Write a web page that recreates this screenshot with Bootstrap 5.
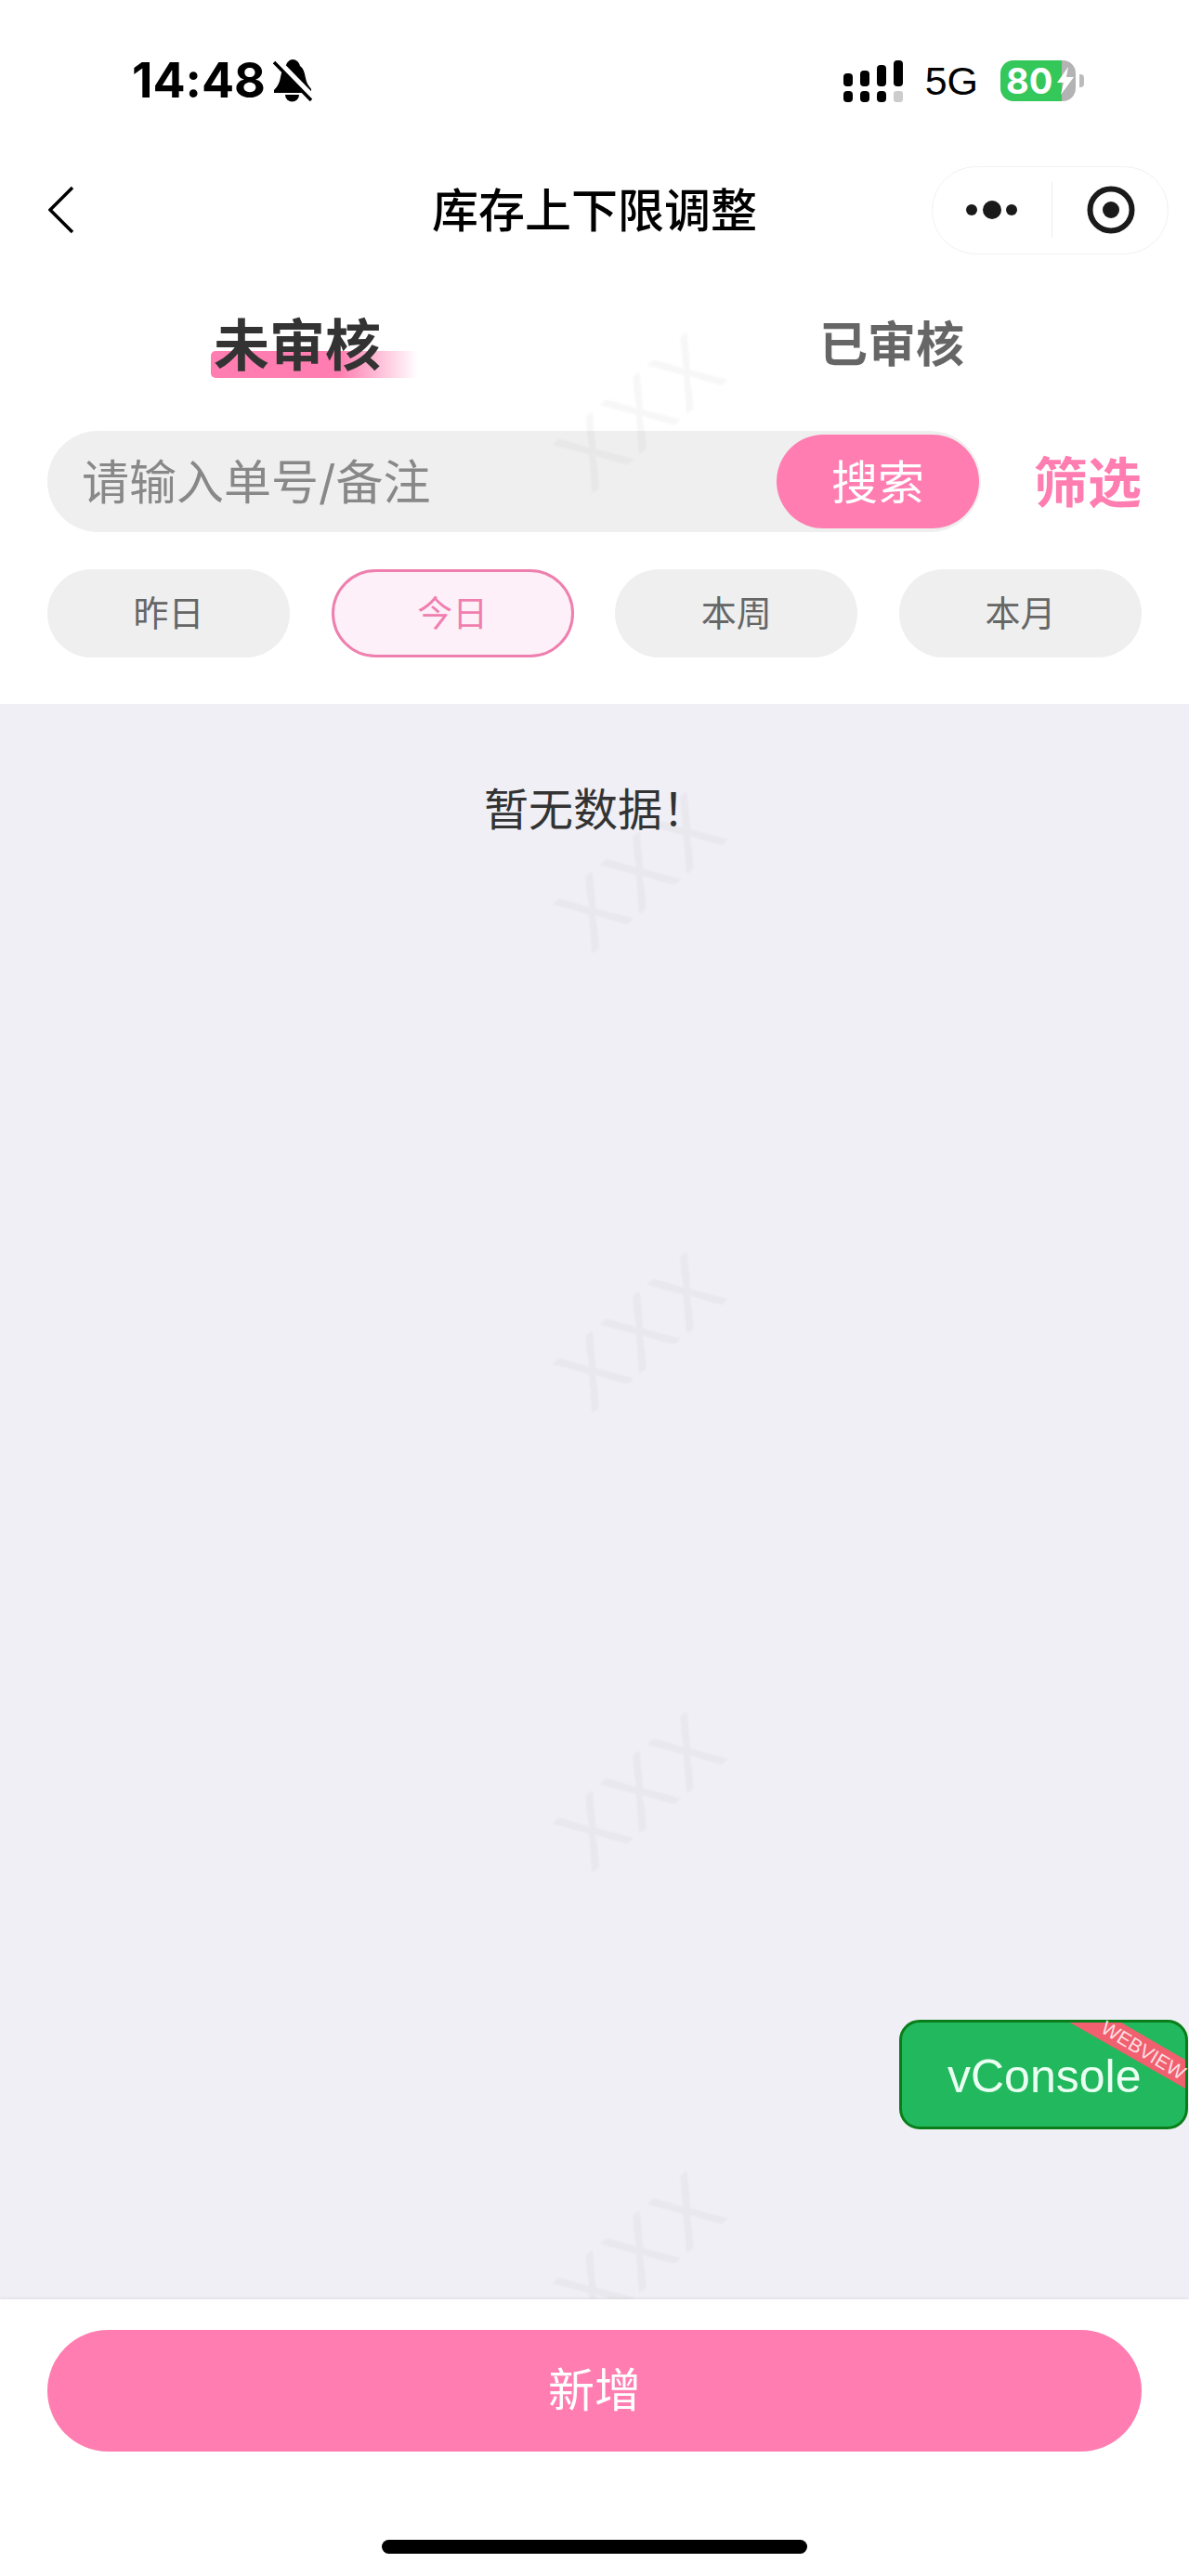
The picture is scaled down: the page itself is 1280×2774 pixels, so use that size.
<!DOCTYPE html>
<html lang="zh-CN">
<head>
    <meta charset="UTF-8">
    <meta name="viewport" content="width=device-width, initial-scale=1.0">
    <title>库存上下限调整</title>
    <link href="https://cdn.jsdelivr.net/npm/bootstrap@5.3.0/dist/css/bootstrap.min.css" rel="stylesheet">
    <style>
        body {
            font-family: "Inter", "Noto Sans CJK SC", sans-serif;
            background: #fff;
            overflow: hidden;
        }
        .phone-page {
            width: 1280px;
            height: 2774px;
        }
        /* status bar */
        .status-bar {
            height: 174px;
            padding: 0 113px 0 142px;
        }
        .status-time {
            font-size: 52px;
            font-weight: 700;
            font-feature-settings: "calt" 0;
            line-height: 1;
            color: #000;
        }
        .status-net {
            font-family: "Liberation Sans", sans-serif;
            font-size: 43px;
            line-height: 1;
            color: #000;
        }
        .battery-body {
            width: 81px;
            height: 44px;
            border-radius: 14px;
            padding-left: 6px;
            background: linear-gradient(90deg, #34c759 66px, #b3b3b3 66px);
            color: #fff;
            font-size: 38px;
            font-weight: 700;
            line-height: 44px;
        }
        .battery-nub {
            width: 5px;
            height: 14px;
            margin-left: 4px;
            border-radius: 0 4px 4px 0;
            background: #bbb;
        }
        /* title bar */
        .title-bar {
            display: grid;
            grid-template-columns: 1fr auto 1fr;
            align-items: center;
            height: 104px;
            padding: 0 22px;
        }
        .title-back {
            margin-left: 30px;
        }
        .title-text {
            padding-top: 2px;
            font-size: 50px;
            font-weight: 500;
            color: #000;
        }
        .capsule {
            width: 255px;
            height: 95px;
            padding-left: 36px;
            gap: 37px;
            border: 1px solid #f1f1f1;
            border-radius: 48px;
            justify-self: end;
        }
        .capsule-line {
            width: 1px;
            height: 60px;
            background: #ececec;
        }
        /* tabs */
        .tab-row {
            height: 182px;
            padding-top: 6px;
        }
        .tab-on {
            font-size: 60px;
            font-weight: 700;
            line-height: 1;
            color: #333;
        }
        .tab-on::before {
            content: "";
            position: absolute;
            left: -3px;
            top: 36px;
            width: 223px;
            height: 29px;
            border-radius: 5px;
            background: linear-gradient(90deg, #ff7db0 62%, rgba(255, 125, 176, 0) 100%);
            z-index: -1;
        }
        .tab-off {
            font-size: 52px;
            font-weight: 700;
            line-height: 1;
            color: #666;
        }
        /* search */
        .search-row {
            padding: 4px 51px 0;
        }
        .search-box {
            width: 1005px;
            height: 109px;
            padding: 0 2px 0 37px;
            background: #efefef;
        }
        .search-hint {
            padding-top: 3px;
            font-size: 51px;
            color: #888;
        }
        .search-btn {
            width: 218px;
            height: 101px;
            padding: 3px 0 0;
            border: 0;
            font-size: 50px;
            color: #fff;
            background: #ff7db0;
        }
        .filter-text {
            padding-top: 3px;
            font-size: 58px;
            font-weight: 700;
            color: #ff7db0;
        }
        /* date pills */
        .date-row {
            padding: 40px 51px 50px;
        }
        .date-pill {
            width: 261px;
            height: 95px;
            padding: 0;
            border: 3px solid transparent;
            font-size: 38px;
            color: #666;
            background: #efefef;
        }
        .date-pill.date-on {
            border-color: #ee7fae;
            color: #f07fb0;
            background: #fdf0f8;
        }
        /* list */
        .list-area {
            background: #efeff5;
            padding: 79px 0 0 2px;
        }
        .empty-text {
            font-size: 48px;
            line-height: 70px;
            color: #333;
        }
        /* watermark */
        .mark-layer {
            position: absolute;
            top: 0;
            left: 0;
            right: 0;
            bottom: 298px;
            display: grid;
            grid-auto-rows: 495px;
            justify-items: center;
            align-items: center;
            padding: 188px 0 0 84px;
            pointer-events: none;
            z-index: 1;
        }
        .mark-text {
            font-size: 125px;
            font-weight: 300;
            line-height: 1;
            color: rgba(0, 0, 0, 0.03);
            filter: blur(1px);
            transform: rotate(-40deg);
        }
        /* bottom */
        .bottom-bar {
            position: relative;
            z-index: 2;
            height: 298px;
            padding: 33px 51px 0;
            background: #fff;
            box-shadow: 0 -1px 3px rgba(0, 0, 0, 0.08);
        }
        .add-btn {
            height: 131px;
            padding: 0;
            border: 0;
            font-size: 50px;
            color: #fff;
            background: #ff7db0;
        }
        .home-bar {
            width: 458px;
            height: 15px;
            margin: 95px auto 0;
            border-radius: 8px;
            background: #000;
        }
        /* vConsole switch */
        .vc-switch {
            position: absolute;
            left: 968px;
            top: 2175px;
            width: 311px;
            height: 118px;
            border: 3px solid #0a7d1a;
            border-radius: 22px;
            background: #22b95e;
            color: #eafff2;
            font-family: "Liberation Sans", sans-serif;
            font-size: 50px;
            line-height: 116px;
            padding-left: 49px;
            z-index: 3;
        }
        .vc-ribbon {
            position: absolute;
            top: 0;
            right: 0;
            width: 124px;
            height: 72px;
            background: #f0606f;
            clip-path: polygon(0 0, 55px 0, 124px 40px, 124px 71px);
        }
        .vc-ribbon-text {
            position: absolute;
            left: 209px;
            top: 18px;
            font-size: 21px;
            line-height: 24px;
            color: #ffdfe3;
            transform: rotate(31deg);
        }
    </style>
</head>
<body>
    <div class="phone-page position-relative d-flex flex-column">
        <!-- Status bar -->
        <div class="status-bar d-flex align-items-center justify-content-between">
            <div class="d-flex align-items-center">
                <span class="status-time">14:48</span>
                <svg class="ms-2" width="42" height="46" viewBox="0 0 42 46">
                    <path d="M21 0C25 0 28 3 29 7C33 10 34 15 35 20C36 26 39 29 41 32V36H1V33C5 29 7 25 8 19C9 13 11 9 14 6C15 3 18 0 21 0Z" fill="#000"/>
                    <path d="M13 38H28A7.500 7.500 0 0 1 13 38Z" fill="#000"/>
                    <path d="M3 1L42 41" stroke="#fff" stroke-width="8"/>
                    <path d="M1 3L41 44" stroke="#000" stroke-width="3.500"/>
                </svg>
            </div>
            <div class="d-flex align-items-center">
                <svg width="64" height="45" viewBox="0 0 64 45">
                    <rect x="0" y="14" width="10" height="14" rx="4"/>
                    <rect x="18" y="11" width="10" height="17" rx="4"/>
                    <rect x="36" y="5" width="10" height="23" rx="4"/>
                    <rect x="54" y="0" width="10" height="28" rx="4"/>
                    <rect x="0" y="33" width="10" height="12" rx="4"/>
                    <rect x="18" y="33" width="10" height="12" rx="4"/>
                    <rect x="36" y="33" width="10" height="12" rx="4"/>
                    <rect x="54" y="33" width="10" height="12" rx="3" fill="#ccc"/>
                </svg>
                <span class="status-net mx-4">5G</span>
                <div class="battery-body d-flex align-items-center">
                    <span>80</span>
                    <svg width="20" height="30" viewBox="0 0 20 30" class="flex-shrink-0 ms-1">
                        <path d="M13 0L1 17H8L5 30L19 11H11Z" fill="#fff"/>
                    </svg>
                </div>
                <div class="battery-nub"></div>
            </div>
        </div>

        <!-- Title bar -->
        <div class="title-bar">
            <svg class="title-back" width="28" height="52" viewBox="0 0 28 52">
                <path d="M26 2L2 26L26 50" fill="none" stroke="#000" stroke-width="3.500"/>
            </svg>
            <div class="title-text">库存上下限调整</div>
            <div class="capsule d-flex align-items-center">
                <svg width="55" height="20" viewBox="0 0 55 20">
                    <circle cx="6" cy="10" r="6" fill="#1a1a1a"/>
                    <circle cx="28" cy="10" r="10" fill="#1a1a1a"/>
                    <circle cx="49" cy="10" r="6" fill="#1a1a1a"/>
                </svg>
                <div class="capsule-line"></div>
                <svg width="52" height="52" viewBox="0 0 52 52">
                    <circle cx="26" cy="26" r="22.500" fill="none" stroke="#1a1a1a" stroke-width="6"/>
                    <circle cx="26" cy="26" r="9" fill="#1a1a1a"/>
                </svg>
            </div>
        </div>

        <!-- Tabs -->
        <div class="tab-row row g-0 align-items-center text-center">
            <div class="col-6">
                <span class="tab-on position-relative d-inline-block">未审核</span>
            </div>
            <div class="col-6">
                <span class="tab-off">已审核</span>
            </div>
        </div>

        <!-- Search -->
        <div class="search-row d-flex align-items-center justify-content-between">
            <div class="search-box rounded-pill d-flex align-items-center justify-content-between">
                <span class="search-hint">请输入单号/备注</span>
                <button type="button" class="btn search-btn rounded-pill">搜索</button>
            </div>
            <span class="filter-text">筛选</span>
        </div>

        <!-- Date filter -->
        <div class="date-row d-flex justify-content-between">
            <button type="button" class="btn date-pill rounded-pill">昨日</button>
            <button type="button" class="btn date-pill date-on rounded-pill">今日</button>
            <button type="button" class="btn date-pill rounded-pill">本周</button>
            <button type="button" class="btn date-pill rounded-pill">本月</button>
        </div>

        <!-- List -->
        <div class="list-area flex-grow-1 text-center">
            <div class="empty-text">暂无数据！</div>
        </div>

        <!-- Bottom -->
        <div class="bottom-bar">
            <button type="button" class="btn add-btn rounded-pill w-100">新增</button>
            <div class="home-bar"></div>
        </div>

        <!-- Watermark -->
        <div class="mark-layer">
            <span class="mark-text">xxx</span>
            <span class="mark-text">xxx</span>
            <span class="mark-text">xxx</span>
            <span class="mark-text">xxx</span>
            <span class="mark-text">xxx</span>
        </div>

        <!-- vConsole -->
        <div class="vc-switch">vConsole
            <div class="vc-ribbon"></div>
            <div class="vc-ribbon-text">WEBVIEW</div>
        </div>
    </div>
    <script src="https://cdn.jsdelivr.net/npm/bootstrap@5.3.0/dist/js/bootstrap.bundle.min.js"></script>
</body>
</html>
